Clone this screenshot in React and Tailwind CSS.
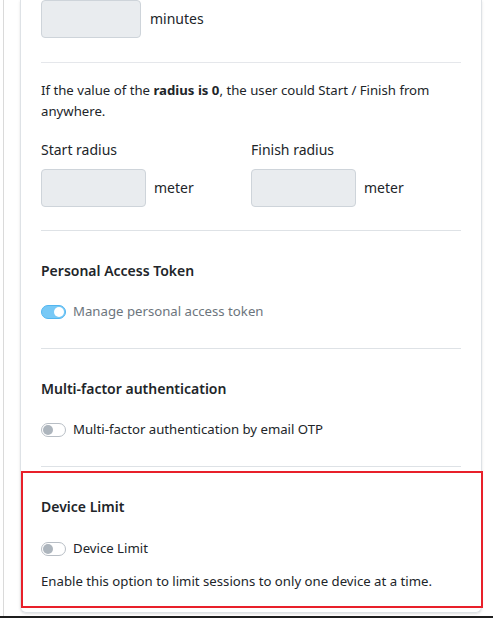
const Toggle = ({ on }) =>
  on ? (
    <span className="relative inline-block h-[14px] w-[25px] shrink-0 rounded-full border border-[#52b6f0] bg-[#78c9f6]">
      <span className="absolute right-[1px] top-[1px] h-[10px] w-[10px] rounded-full bg-white" />
    </span>
  ) : (
    <span className="relative inline-block h-[14px] w-[25px] shrink-0 rounded-full border border-[#b8bec5] bg-white">
      <span className="absolute left-[1px] top-[1px] h-[10px] w-[10px] rounded-full bg-[#adb5bd]" />
    </span>
  );

const Section = ({ title, label, on, muted }) => (
  <div className="pt-[28px] pb-[26px]">
    <h3 className="h-6 text-[14px] font-semibold leading-6 text-[#212529]">{title}</h3>
    <div className="mt-[18px] flex h-[21px] items-center gap-[7px]">
      <Toggle on={on} />
      <span className={muted ? "text-[#6c757d]" : "text-[#212529]"}>{label}</span>
    </div>
  </div>
);

const App = () => {
  return (
    <div
      className="min-h-[618px] bg-white text-[13.2px] leading-[21px] text-[#212529]"
      style={{ fontFamily: '"Segoe UI", "Noto Sans", "Open Sans", sans-serif' }}
    >
      <div className="ml-[3px] border-l border-[#dadada] pl-4">
        <div className="w-[462px] rounded-b-md border border-t-0 border-[#dee2e6] px-5 pb-[20px] shadow-sm">
          {/* duration */}
          <div className="flex items-center gap-[9px]">
            <div className="h-[38px] w-[100px] rounded border border-[#ced4da] bg-[#e9ecef]" />
            <span className="relative -top-[1px] text-[14px]">minutes</span>
          </div>
          <hr className="mt-6 border-[#e5e7eb]" />

          {/* radius */}
          <p className="mt-[17px]">
            If the value of the <b className="font-bold">radius is 0</b>, the user could Start / Finish from
            anywhere.
          </p>
          <div className="mt-[17px] grid grid-cols-2">
            {["Start radius", "Finish radius"].map((l) => (
              <div key={l}>
                <div className="text-[14px]">{l}</div>
                <div className="mt-[9px] flex items-center gap-[8px]">
                  <div className="h-[38px] w-[105px] rounded border border-[#ced4da] bg-[#e9ecef]" />
                  <span className="relative -top-[1px] text-[14px]">meter</span>
                </div>
              </div>
            ))}
          </div>
          <hr className="mt-[23px] border-[#dee2e6]" />

          <Section title="Personal Access Token" label="Manage personal access token" on muted />
          <hr className="border-[#dee2e6]" />

          <Section title="Multi-factor authentication" label="Multi-factor authentication by email OTP" />
          <hr className="border-[#dee2e6]" />

          {/* highlighted section */}
          <div className="relative">
            <div className="pointer-events-none absolute -left-5 -right-[22px] top-[4px] -bottom-[16px] border-2 border-[#e8202a]" />
            <div className="pt-[28px]">
              <h3 className="h-6 text-[14px] font-semibold leading-6">Device Limit</h3>
              <div className="mt-[19px] flex h-[21px] items-center gap-[7px]">
                <Toggle />
                <span>Device Limit</span>
              </div>
              <p className="mt-[12px]">Enable this option to limit sessions to only one device at a time.</p>
            </div>
          </div>
        </div>
        <div className="h-[3px]" />
      </div>
      <div className="h-[2px] bg-[#1e1e1e]" />
    </div>
  );
};

export default App;
